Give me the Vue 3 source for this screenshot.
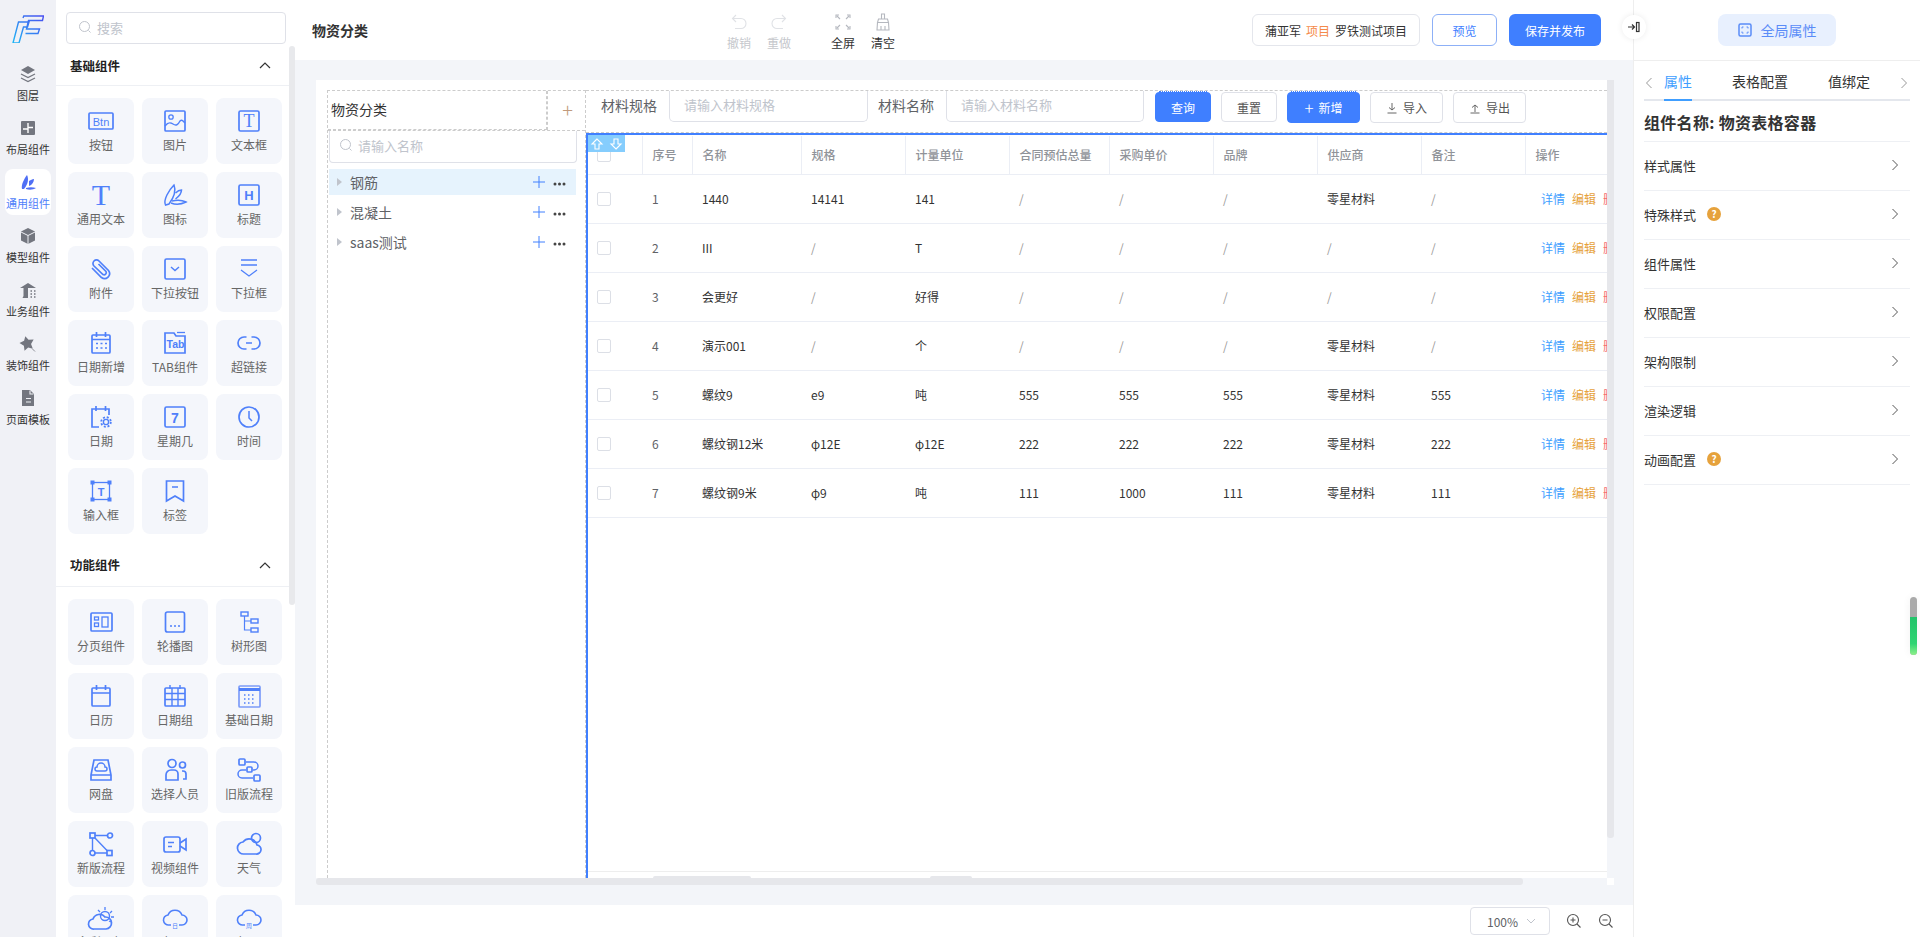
<script setup>
const T = (x, y, s, t, fam = 'Liberation Sans', w = 'normal') =>
  `<text x="${x}" y="${y}" font-size="${s}" font-family="${fam}" font-weight="${w}" text-anchor="middle" fill="#4f80fa" stroke="none">${t}</text>`
const cloud = 'M7 20a5 5 0 0 1-1-10a7.5 7.5 0 0 1 14 0a5 5 0 0 1 0 10h-3M9 20H7'
const I = {
  btn: `<rect x="1" y="5" width="24" height="16" rx="1"/>` + T(13, 17.5, 11, 'Btn'),
  img: `<rect x="3" y="3" width="20" height="20" rx="1"/><circle cx="9" cy="9" r="2.2" stroke-width="1.3"/><path d="M3 18c3-4 5-4 8-2s5 1 7-3c2-2 3 0 5 2" stroke-width="1.4"/>`,
  txt: `<rect x="3" y="3" width="20" height="20" rx="1.5"/>` + T(13, 19, 18, 'T', 'Liberation Serif'),
  bigT: T(13, 23, 30, 'T', 'Liberation Serif'),
  fan: `<path d="M3.5 23C1 18 7 8 12 3c2 5 1 11-5 19z" stroke-width="1.5"/><path d="M13.5 11c2-2 5-3 6-3c0 3-2 6-6 9M10 19c4-1 10-1 14 1c-4 2-10 3-15 1" stroke-width="1.5"/>`,
  h: `<rect x="3" y="3" width="20" height="20" rx="1.5"/>` + T(13, 18, 13, 'H', 'Liberation Sans', 'bold'),
  clip: `<path d="M10.5 8L18 15.5a2.2 2.2 0 0 1-3 3L6 10a3.5 3.5 0 0 1 5-5L20.5 14.5a5 5 0 0 1-7 7L4 12"/>`,
  ddb: `<rect x="3" y="3" width="20" height="20" rx="1.5"/><path d="M9 11l4 3.5 4-3.5" stroke-width="1.5"/>`,
  dd: `<path d="M5 4h16M5 9h16M5 14l8 6 8-6" stroke-width="1.3"/>`,
  calAdd: `<rect x="4" y="5" width="18" height="18" rx="1"/><path d="M4 9.5h18M8.5 2v5M17.5 2v5"/><path d="M8 13.5h2m2.5 0h2m2.5 0h2M8 18h2m2.5 0h2m2.5 0h2" stroke-width="1.5"/>`,
  tab: `<path d="M3 3h9l2 3h9v17H3z"/><path d="M15 2.5h8" stroke-width="1.3"/>` + T(13.5, 18, 10.5, 'Tab', 'Liberation Sans', 'bold'),
  link: `<path d="M10.5 7H8a6 6 0 0 0 0 12h2.5M15.5 7H18a6 6 0 0 1 0 12h-2.5M10 13h6"/>`,
  calGear: `<path d="M21 11V5H4v18h7M8 2v5M17.500 2v5"/><circle cx="18" cy="18" r="2.600" stroke-width="1.400"/><circle cx="18" cy="18" r="4.800" stroke-width="1.800" stroke-dasharray="2 1.800"/>`,
  week: `<rect x="3" y="3" width="20" height="20" rx="1.500"/>` + T(13, 18.500, 14, '7', 'Liberation Sans', 'bold'),
  clock: `<circle cx="13" cy="13" r="10"/><path d="M13 7v7l3 3" stroke-width="1.500"/>`,
  input: `<rect x="4.500" y="4.500" width="17" height="17" stroke-width="1.300"/><path d="M2.500 2.500h4v4h-4zM19.500 2.500h4v4h-4zM2.500 19.500h4v4h-4zM19.500 19.500h4v4h-4z" fill="#4f80fa" stroke="none"/>` + T(13, 17.500, 11, 'T', 'Liberation Sans', 'bold'),
  tag: `<path d="M4.500 3h17v20l-8.500-5-8.500 5zM10 9h6"/>`,
  page: `<rect x="3" y="4" width="21" height="18" rx="1"/><rect x="6.500" y="8" width="4" height="3" stroke-width="1.300"/><rect x="6.500" y="14" width="4" height="3.500" stroke-width="1.300"/><rect x="14" y="8" width="6" height="10" stroke-width="1.300"/>`,
  car: `<rect x="3.500" y="3" width="19" height="20" rx="2"/><path d="M8 17h2m2 0h2m2 0h2" stroke-width="1.500"/>`,
  tree: `<rect x="5" y="3" width="7" height="4" stroke-width="1.400"/><path d="M8.500 7v14h6.500M8.500 12H15" stroke-width="1.200"/><rect x="15" y="10" width="7" height="4" stroke-width="1.400"/><rect x="15" y="19" width="7" height="4" stroke-width="1.400"/>`,
  cal: `<rect x="4" y="5" width="18" height="18" rx="1"/><path d="M4 10h18M8.500 2v5M17.500 2v5"/>`,
  calGrid: `<rect x="3" y="5" width="20" height="18" rx="1"/><path d="M3 10.500h20M3 16.500h20M10 5v18M16 5v18M8 2v4M18 2v4" stroke-width="1.400"/>`,
  calBase: `<rect x="3" y="3" width="21" height="21" rx="1" stroke="#7c9cf8"/><path d="M3 6.500h21" stroke-width="3"/><path d="M8 12h1.500m2.500 0h1.500m2.500 0h1.500M8 16h1.500m2.500 0h1.500m2.500 0h1.500M8 20h1.500m2.500 0h1.500m2.500 0h1.500" stroke-width="1.300"/>`,
  disk: `<path d="M6 3h14l3 15v5H3v-5zM3 18h20"/><path d="M9 14a2 2 0 0 1 0-4a4 4 0 0 1 8 0a2 2 0 0 1 0 4z" stroke-width="1.500"/>`,
  men: `<circle cx="10" cy="6.500" r="4"/><path d="M4 23v-5a5 5 0 0 1 5-5h3a4 4 0 0 1 4 4v6z"/><circle cx="20.500" cy="8" r="3"/><path d="M20 14h1a3 3 0 0 1 3 3v5h-3"/>`,
  flowOld: `<rect x="3" y="2" width="6" height="6" rx="1"/><rect x="11" y="10" width="5" height="5" rx="1"/><rect x="18" y="18" width="6" height="6" rx="1"/><path d="M10 5h8a3.500 3.500 0 0 1 0 8h-1M10 13H6a4 4 0 0 0 0 8h11" stroke-width="1.500"/>`,
  flowNew: `<rect x="2" y="2" width="5" height="5"/><circle cx="22" cy="4.500" r="2.500"/><circle cx="4.500" cy="22" r="2.500"/><rect x="19" y="19.500" width="5" height="5"/><path d="M7 4.500h12.500M7 7l12 12.500M4.500 7v12.500M7 22h12" stroke-width="1.400"/>`,
  video: `<rect x="2" y="6" width="16" height="15" rx="2"/><path d="M18 12l6-4v11l-6-4M6 11.500h6M6 15.500h4"/>`,
  weather: `<circle cx="20" cy="7" r="4.500"/><path d="M8 23a6 6 0 0 1-1-12a8 8 0 0 1 14 3a4.500 4.500 0 0 1-1 9z"/>`,
  sunny: `<circle cx="17" cy="11" r="4.500" stroke-width="1.400"/><path d="M17 2v3M24 6l-2 2M26 12h-3M23 17l-2-1M10 5l2 2" stroke-width="1.300"/><path d="M6 24a5 5 0 0 1-1-10a7 7 0 0 1 12-2a6 6 0 0 1 1 12z"/>`,
  cDay: `<path d="${cloud}" stroke-width="1.600"/>` + T(13, 23, 6, '日', 'Noto Sans CJK SC'),
  cWeek: `<path d="${cloud}" stroke-width="1.600"/>` + T(13, 23, 6, '周', 'Noto Sans CJK SC')
}
const R = {
  layer: `<path d="M10 2l7 4-7 4-7-4z" fill="currentColor" stroke="none"/><path d="M3 10l7 3.500 7-3.500M3 14l7 3.500 7-3.500"/>`,
  layout: `<rect x="3" y="3" width="14" height="14" rx="1" fill="currentColor" stroke="none"/><path d="M5 11h5M10 5v6M10 11v4M10 9.500h5" stroke="#fff" stroke-width="1.400"/>`,
  fan: `<path d="M4 17C3 13 6 7 9 3c2 4 1 9-3 14zM11 9c2-1 3-2 5-2 0 3-2 6-5 7zM8 16c3-1 7-1 10 0-3 2-7 2-10 1z" fill="currentColor" stroke="none"/>`,
  cube: `<path d="M10 2l7 3.500v9L10 18l-7-3.500v-9z" fill="currentColor" stroke="none"/><path d="M3 6l7 3.500L17 6M10 9.500V18" stroke="#f0f1f6" stroke-width="1"/>`,
  biz: `<path d="M2 8l8-5 8 5zM5.500 8h4.500v10H4.500l1-2z" fill="currentColor" stroke="none"/><path d="M12.500 11h1.500m2 0h1.500M12.500 14h1.500m2 0h1.500M12.500 17h1.500m2 0h1.500" stroke-width="1.600"/>`,
  star: `<path transform="rotate(-14 9 9)" d="M9 2l2.300 4.200 5 1-3.600 3.700.6 5L9 13.700 4.700 16l.6-5L1.700 7.200l5-1z" fill="currentColor" stroke="none"/><path d="M14.500 15l2.500 2.500" stroke-width=".8"/>`,
  doc: `<path d="M4 2h8l4 4v12H4z" fill="currentColor" stroke="none"/><path d="M8 10.500h5M8 14h5M12 2.500V6h3.500" stroke="#f0f1f6" stroke-width="1.100"/>`
}
const rail = [
  ['图层', 'layer'], ['布局组件', 'layout'], ['通用组件', 'fan', true], ['模型组件', 'cube'],
  ['业务组件', 'biz'], ['装饰组件', 'star'], ['页面模板', 'doc']
]
const basics = [
  ['按钮', 'btn'], ['图片', 'img'], ['文本框', 'txt'], ['通用文本', 'bigT'], ['图标', 'fan'], ['标题', 'h'],
  ['附件', 'clip'], ['下拉按钮', 'ddb'], ['下拉框', 'dd'], ['日期新增', 'calAdd'], ['TAB组件', 'tab'], ['超链接', 'link'],
  ['日期', 'calGear'], ['星期几', 'week'], ['时间', 'clock'], ['输入框', 'input'], ['标签', 'tag']
]
const funcs = [
  ['分页组件', 'page'], ['轮播图', 'car'], ['树形图', 'tree'], ['日历', 'cal'], ['日期组', 'calGrid'], ['基础日期', 'calBase'],
  ['网盘', 'disk'], ['选择人员', 'men'], ['旧版流程', 'flowOld'], ['新版流程', 'flowNew'], ['视频组件', 'video'], ['天气', 'weather'],
  ['多彩天气', 'sunny'], ['天气一日', 'cDay'], ['天气一周', 'cWeek']
]
const sections = [{ title: '基础组件', items: basics }, { title: '功能组件', items: funcs }]
const tree = ['钢筋', '混凝土', 'saas测试']
const cols = [
  ['序号', 50], ['名称', 109], ['规格', 104], ['计量单位', 104], ['合同预估总量', 100],
  ['采购单价', 104], ['品牌', 104], ['供应商', 104], ['备注', 104]
]
const rows = [
  ['1', '1440', '14141', '141', '/', '/', '/', '零星材料', '/'],
  ['2', 'III', '/', 'T', '/', '/', '/', '/', '/'],
  ['3', '会更好', '/', '好得', '/', '/', '/', '/', '/'],
  ['4', '演示001', '/', '个', '/', '/', '/', '零星材料', '/'],
  ['5', '螺纹9', 'e9', '吨', '555', '555', '555', '零星材料', '555'],
  ['6', '螺纹钢12米', 'φ12E', 'φ12E', '222', '222', '222', '零星材料', '222'],
  ['7', '螺纹钢9米', 'φ9', '吨', '111', '1000', '111', '零星材料', '111']
]
const props = [['样式属性'], ['特殊样式', true], ['组件属性'], ['权限配置'], ['架构限制'], ['渲染逻辑'], ['动画配置', true]]
</script>

<template>
  <div class="app">
    <aside class="rail">
      <div class="logo">
        <svg width="32" height="28" viewBox="0 0 32 28" fill="none">
          <defs>
            <linearGradient id="lg" x1="0" y1="1" x2="1" y2="0">
              <stop offset="0" stop-color="#1fb6f5" />
              <stop offset="1" stop-color="#4a4ff0" />
            </linearGradient>
          </defs>
          <path d="M1 28L6.500 7H17L15.500 12H11.500L7 28ZM11 3L11.800 1H31.500L30.500 5.500H16.500L14.500 14H27.500L26 18.500H13.500" stroke="url(#lg)" stroke-width="1.400" />
        </svg>
      </div>
      <div v-for="r in rail" :key="r[0]" class="rail-item" :class="{ on: r[2] }">
        <svg class="rail-ic" viewBox="0 0 20 20" width="20" height="20" v-html="R[r[1]]"></svg>
        <span>{{ r[0] }}</span>
      </div>
    </aside>

    <section class="panel">
      <div class="panel-search">
        <svg width="14" height="14" viewBox="0 0 14 14" class="sicon"><circle cx="6.500" cy="6.500" r="5" /><path d="M10.500 10.500l2 2" /></svg>
        <span>搜索</span>
      </div>
      <div v-for="s in sections" :key="s.title" class="sec">
        <div class="sec-head">
          <b>{{ s.title }}</b>
          <svg width="12" height="8" viewBox="0 0 12 8" class="up"><path d="M1 7l5-5 5 5" /></svg>
        </div>
        <div class="cards">
          <div v-for="c in s.items" :key="c[0]" class="card">
            <svg class="ic" viewBox="0 0 26 26" width="26" height="26" v-html="I[c[1]]"></svg>
            <span>{{ c[0] }}</span>
          </div>
        </div>
      </div>
      <div class="panel-bar"></div>
    </section>

    <main class="main">
      <header class="top">
        <div class="page-title">物资分类</div>
        <div class="tools">
          <div class="tool off">
            <svg width="20" height="20" viewBox="0 0 20 20"><path d="M7 3L3.500 6.500 7 10M4 6.500h8a4.500 4.500 0 0 1 0 10H6" /></svg>
            <span>撤销</span>
          </div>
          <div class="tool off">
            <svg width="20" height="20" viewBox="0 0 20 20"><path d="M13 3l3.500 3.500L13 10M16 6.500H8a4.500 4.500 0 0 0 0 10h6" /></svg>
            <span>重做</span>
          </div>
        </div>
        <div class="tools second">
          <div class="tool">
            <svg width="20" height="20" viewBox="0 0 20 20"><path d="M3 6V3h3M14 3h3v3M3 14v3h3M17 14v3h-3M4 4l3 3M16 4l-3 3M4 16l3-3M16 16l-3-3" /></svg>
            <span>全屏</span>
          </div>
          <div class="tool">
            <svg width="20" height="20" viewBox="0 0 20 20"><path d="M8.500 2h3v5h-3zM5.500 7h9l1 3.500h-11zM4.500 10.500l-.5 7.500h12l-.5-7.500M8 14v4M12 14v4" /></svg>
            <span>清空</span>
          </div>
        </div>
        <div class="top-right">
          <div class="project">蒲亚军<em>项目</em>罗铁测试项目</div>
          <button class="btn-preview">预览</button>
          <button class="btn-save">保存并发布</button>
        </div>
      </header>

      <div class="stage">
        <div class="canvas">
          <div class="left">
            <div class="left-head">
              <div class="left-title">物资分类</div>
              <div class="left-add">+</div>
            </div>
            <div class="tree-search">
              <svg width="14" height="14" viewBox="0 0 14 14" class="sicon"><circle cx="6.500" cy="6.500" r="5" /><path d="M10.500 10.500l2 2" /></svg>
              <span>请输入名称</span>
            </div>
            <div class="tree">
              <div v-for="(t, i) in tree" :key="t" class="tree-row" :class="{ sel: i === 0 }">
                <i class="caret"></i>
                <span class="tree-label">{{ t }}</span>
                <svg class="tree-plus" width="12" height="12" viewBox="0 0 12 12"><path d="M6 0v12M0 6h12" /></svg>
                <svg class="tree-more" width="13" height="4" viewBox="0 0 13 4"><circle cx="2" cy="2" r="1.500" /><circle cx="6.500" cy="2" r="1.500" /><circle cx="11" cy="2" r="1.500" /></svg>
              </div>
            </div>
          </div>

          <div class="right">
            <div class="toolbar">
              <label>材料规格</label>
              <div class="field w1">请输入材料规格</div>
              <label class="l2">材料名称</label>
              <div class="field w2">请输入材料名称</div>
              <button class="b b-primary b-q dotted">查询</button>
              <button class="b b-q">重置</button>
              <button class="b b-primary b-w dotted tall"><span class="pl">+</span>新增</button>
              <button class="b b-w tall">
                <svg width="12" height="12" viewBox="0 0 12 12"><path d="M6 1v7M3 5.500L6 8l3-2.500M1.500 11h9" /></svg>导入
              </button>
              <button class="b b-w tall">
                <svg width="12" height="12" viewBox="0 0 12 12"><path d="M6 10V3M3 5.500L6 3l3 2.500M1.500 11h9" /></svg>导出
              </button>
            </div>
            <div class="table-box">
              <div class="mover">
                <svg width="14" height="14" viewBox="0 0 14 14"><path d="M7 2L2 7h3v5h4V7h3z" /></svg>
                <svg width="14" height="14" viewBox="0 0 14 14"><path d="M7 12l5-5H9V2H5v5H2z" /></svg>
              </div>
              <div class="table-wrap">
                <table>
                  <colgroup>
                    <col style="width:54px" />
                    <col v-for="c in cols" :key="c[0]" :style="{ width: c[1] + 'px' }" />
                    <col style="width:110px" />
                  </colgroup>
                  <thead>
                    <tr>
                      <th class="c0"><i class="chk"></i></th>
                      <th v-for="c in cols" :key="c[0]">{{ c[0] }}</th>
                      <th>操作</th>
                    </tr>
                  </thead>
                  <tbody>
                    <tr v-for="r in rows" :key="r[0]">
                      <td class="c0"><i class="chk"></i></td>
                      <td v-for="(v, i) in r" :key="i" :class="{ slash: v === '/', idx: i === 0 }">{{ v }}</td>
                      <td class="ops"><a class="o1">详情</a><a class="o2">编辑</a><a class="o3">删除</a></td>
                    </tr>
                  </tbody>
                </table>
              </div>
              <div class="table-foot"><i class="th1"></i><i class="th2"></i></div>
            </div>
          </div>
        </div>
        <div class="vbar"><i></i></div>
        <div class="hbar"><i></i></div>
        <div class="corner"></div>
      </div>

      <footer class="foot">
        <div class="zoom-sel">100%<svg width="10" height="6" viewBox="0 0 10 6"><path d="M1 1l4 4 4-4" /></svg></div>
        <svg class="zi" width="16" height="16" viewBox="0 0 16 16"><circle cx="7" cy="7" r="5.500" /><path d="M11 11l3.500 3.500M4.500 7h5M7 4.500v5" /></svg>
        <svg class="zi" width="16" height="16" viewBox="0 0 16 16"><circle cx="7" cy="7" r="5.500" /><path d="M11 11l3.500 3.500M4.500 7h5" /></svg>
      </footer>
      <div class="collapse">
        <svg width="12" height="12" viewBox="0 0 12 12"><path d="M0 6h6M4 3.500L6.500 6 4 8.500" /><rect x="8.500" y="1.500" width="2.500" height="9" /></svg>
      </div>
    </main>

    <aside class="props">
      <div class="props-top">
        <div class="global">
          <svg width="14" height="14" viewBox="0 0 14 14"><rect x="1" y="1" width="12" height="12" rx="1.500" /><path d="M4 5.500V4h1.500M8.500 4H10v1.500M4 8.500V10h1.500M10 8.500V10H8.500" stroke-width="1" /></svg>
          全局属性
        </div>
      </div>
      <div class="tabs">
        <svg class="tab-l" width="8" height="12" viewBox="0 0 8 12"><path d="M6.500 1L1.500 6l5 5" /></svg>
        <span class="tab on">属性</span>
        <span class="tab">表格配置</span>
        <span class="tab">值绑定</span>
        <svg class="tab-r" width="8" height="12" viewBox="0 0 8 12"><path d="M1.500 1l5 5-5 5" /></svg>
      </div>
      <h3 class="comp">组件名称: 物资表格容器</h3>
      <div v-for="p in props" :key="p[0]" class="prop">
        <span>{{ p[0] }}</span>
        <i v-if="p[1]" class="q">?</i>
        <svg width="8" height="12" viewBox="0 0 8 12"><path d="M1.500 1l5 5-5 5" /></svg>
      </div>
      <div class="slider"><i></i></div>
    </aside>
  </div>
</template>

<style>
html, body { margin: 0; padding: 0; overflow: hidden; background: #fff; }
</style>

<style scoped>
.app { display: flex; width: 1920px; height: 937px; overflow: hidden; background: #fff; font-family: "Noto Sans CJK SC", "Noto Sans", sans-serif; font-size: 12px; color: #333; }
button { font-family: inherit; cursor: pointer; padding: 0; }
i { font-style: normal; }

.rail { width: 56px; flex: none; background: #f0f1f6; display: flex; flex-direction: column; align-items: center; }
.logo { height: 61px; box-sizing: border-box; padding-top: 15px; }
.logo svg { display: block; }
.rail-item { width: 46px; height: 46px; margin-bottom: 8px; border-radius: 8px; display: flex; flex-direction: column; align-items: center; color: #333; font-size: 11px; line-height: 16px; padding-top: 3px; box-sizing: border-box; }
.rail-item span { white-space: nowrap; margin-top: 3px; }
.rail-ic { color: #73767f; fill: none; stroke: currentColor; stroke-width: 1.300; }
.rail-item.on { background: #fff; color: #4f80fa; }
.rail-item.on .rail-ic { color: #4f6ff5; }

.panel { width: 239px; flex: none; position: relative; height: 937px; overflow: hidden; background: #fff; }
.panel-search { margin: 12px 9px 2px 10px; height: 32px; box-sizing: border-box; border: 1px solid #dfe1e8; border-radius: 4px; display: flex; align-items: center; padding: 0 0 2px 11px; color: #c0c4cc; font-size: 13px; gap: 5px; }
.sicon { fill: none; stroke: #c0c4cc; stroke-width: 1; flex: none; }
.sec-head { height: 40px; box-sizing: border-box; width: 233px; border-bottom: 1px solid #eef0f4; display: flex; align-items: center; justify-content: space-between; padding: 0 18px 1px 14px; font-size: 12px; }
.sec + .sec .sec-head { padding-bottom: 4px; }
.sec-head b { font-size: 12.500px; font-weight: 700; color: #222; }
.up { fill: none; stroke: #333; stroke-width: 1.200; }
.cards { display: grid; grid-template-columns: repeat(3, 66px); grid-auto-rows: 66px; gap: 8px; padding: 12px 0 13px 12px; }
.card { background: #f4f6fb; border-radius: 8px; display: flex; flex-direction: column; align-items: center; padding-top: 10px; box-sizing: border-box; color: #666; font-size: 12px; line-height: 18px; }
.card span { margin-top: 2px; white-space: nowrap; }
.ic { fill: none; stroke: #4f80fa; stroke-width: 1.700; overflow: visible; flex: none; }
.panel-bar { position: absolute; left: 233px; top: 46px; width: 6px; height: 559px; background: #e8e9ec; border-radius: 3px; }

.main { flex: none; width: 1338px; display: flex; flex-direction: column; position: relative; }
.top { height: 60px; flex: none; display: flex; align-items: center; }
.page-title { margin-left: 17px; width: 56px; font-size: 14px; font-weight: 600; color: #333; white-space: nowrap; }
.tools { display: flex; margin-left: 351px; }
.tools.second { margin-left: 24px; }
.tool { width: 40px; display: flex; flex-direction: column; align-items: center; font-size: 12px; color: #333; line-height: 16px; padding-top: 3px; }
.tool svg { fill: none; stroke: #b5b8bf; stroke-width: 1.100; margin-bottom: 3px; }
.tool.off { color: #c5c7cc; }
.tool.off svg { stroke: #e0e2e6; }
.top-right { margin-left: auto; margin-right: 32px; display: flex; gap: 12px; }
.project { height: 32px; width: 168px; box-sizing: border-box; border: 1px solid #e4e6ec; border-radius: 6px; display: flex; align-items: center; justify-content: center; font-size: 12px; color: #333; white-space: nowrap; }
.project em { font-style: normal; color: #f58a4a; margin: 0 5px; }
.btn-preview { width: 65px; height: 32px; border: 1px solid #8db0f7; border-radius: 6px; background: #fff; color: #3f7fff; font-size: 12px; }
.btn-save { width: 92px; height: 32px; border: 0; border-radius: 6px; background: #3f7fff; color: #fff; font-size: 12px; }

.stage { height: 845px; flex: none; box-sizing: border-box; background: #f3f5f9; padding: 20px 19px 20px 21px; display: grid; grid-template-columns: 1291px 7px; grid-template-rows: 798px 7px; }
.canvas { background: #fff; display: flex; padding: 10px 0 0 11px; box-sizing: border-box; overflow: hidden; min-width: 0; }
.vbar { background: #f3f5f9; }
.vbar i { display: block; height: 758px; background: #e6e7eb; border-radius: 0 0 3px 3px; }
.hbar { background: transparent; }
.hbar i { display: block; width: 1207px; height: 7px; background: #e6e7eb; border-radius: 3px; }
.corner { background: #fff; }

.left { width: 259px; flex: none; box-sizing: border-box; border: 1px dashed #ccc; border-bottom: 0; display: flex; flex-direction: column; }
.left-head { display: flex; height: 39px; flex: none; border-bottom: 1px dashed #ccc; }
.left-title { flex: 1; border: 1px dashed #ccc; border-top: 0; border-left: 0; font-size: 14px; color: #333; line-height: 37px; padding-left: 3px; }
.left-add { width: 38px; flex: none; text-align: center; line-height: 38px; font-size: 20px; font-weight: 300; color: #c19a7c; border-left: 1px dashed #ccc; padding-left: 2px; box-sizing: border-box; }
.tree-search { width: 248px; height: 32px; margin-left: 1px; flex: none; box-sizing: border-box; border: 1px solid #dfe1e8; border-top: 0; border-radius: 0 0 4px 4px; display: flex; align-items: center; padding: 0 0 3px 9px; gap: 5px; color: #c0c4cc; font-size: 13px; }
.tree { margin: 6px 0 0 1px; width: 247px; }
.tree-row { height: 26px; margin-bottom: 4px; display: flex; align-items: center; color: #606266; font-size: 14px; padding-right: 10px; }
.tree-row.sel { background: #e6f3fd; }
.caret { width: 0; height: 0; border-left: 5px solid #c0c4cc; border-top: 4px solid transparent; border-bottom: 4px solid transparent; margin: 0 8px 0 8px; }
.tree-label { flex: 1; }
.tree-plus { stroke: #4080ff; stroke-width: 1; fill: none; margin-right: 8px; flex: none; }
.tree-more { fill: #444; margin-top: 3px; flex: none; }

.right { flex: 1; min-width: 0; display: flex; flex-direction: column; }
.toolbar { height: 43px; flex: none; box-sizing: border-box; border-top: 1px dashed #ccc; border-bottom: 1px dashed #ccc; display: flex; align-items: flex-start; padding-left: 15px; }
.toolbar label { font-size: 14px; color: #606266; line-height: 29px; width: 56px; white-space: nowrap; }
.toolbar .l2 { margin-left: 10px; }
.field { height: 31px; box-sizing: border-box; border: 1px solid #dfe1e8; border-top: 0; border-radius: 0 0 5px 5px; margin-left: 12px; padding-left: 14px; line-height: 28px; font-size: 13px; color: #c0c4cc; white-space: nowrap; }
.w1 { width: 199px; }
.w2 { width: 198px; }
.b { height: 30px; margin: 1px 0 0 10px; box-sizing: border-box; border: 1px solid #dfe1e8; border-radius: 4px; background: #fff; color: #555; font-size: 12px; display: flex; align-items: center; justify-content: center; gap: 5px; position: relative; }
.b svg { fill: none; stroke: #666; stroke-width: 1; }
.b-primary { background: #3f7fff; border-color: #3f7fff; color: #fff; }
.b-q { width: 56px; }
.b-w { width: 73px; }
.w2 + .b { margin-left: 11px; }
.tall { height: 31px; }
.pl { font-size: 17px; font-weight: 300; line-height: 16px; }
.dotted::before { content: ""; position: absolute; left: 3px; right: 3px; top: -2px; border-top: 1px dotted #4080ff; }

.table-box { flex: 1; min-height: 0; position: relative; border-top: 2px solid #4080ff; border-left: 2px solid #4080ff; display: flex; flex-direction: column; margin-left: 0; }
.mover { position: absolute; left: 0; top: 0; width: 37px; height: 17px; background: #85cdfd; display: flex; align-items: center; justify-content: space-around; z-index: 2; }
.mover svg { fill: none; stroke: #fff; stroke-width: 1.100; }
.table-wrap { flex: 1; min-height: 0; overflow: hidden; padding-top: 1px; }
table { border-collapse: collapse; table-layout: fixed; width: 1047px; font-size: 12px; }
th { height: 38px; padding: 0 10px; box-sizing: border-box; text-align: left; font-weight: 500; color: #909399; border-right: 1px solid #ebeef5; border-bottom: 1px solid #ebeef5; white-space: nowrap; }
td { height: 49px; padding: 0 10px; box-sizing: border-box; color: #333; border-bottom: 1px solid #ebeef5; white-space: nowrap; }
th:last-child { border-right: 0; }
.c0 { padding-left: 9px; }
.idx { color: #606266; }
.slash { color: #999; }
.chk { display: block; width: 14px; height: 14px; box-sizing: border-box; border: 1px solid #dcdfe6; border-radius: 2px; background: #fff; }
.ops { padding-left: 16px; }
.ops a { margin-right: 7px; }
.o1 { color: #409eff; }
.o2 { color: #e6a23c; }
.o3 { color: #f56c6c; }
.table-foot { height: 7px; flex: none; box-sizing: border-box; border-top: 1px solid #eee; display: flex; align-items: flex-end; padding-left: 65px; }
.th1, .th2 { display: block; height: 2px; background: #e6e7eb; border-radius: 2px 2px 0 0; }
.th1 { width: 98px; }
.th2 { width: 42px; margin-left: 179px; }

.foot { flex: 1; display: flex; align-items: center; padding-left: 1175px; }
.zoom-sel { width: 80px; height: 28px; box-sizing: border-box; border: 1px solid #dfe1e8; border-radius: 4px; display: flex; align-items: center; padding-left: 16px; font-size: 12px; color: #606266; gap: 8px; }
.zoom-sel svg { fill: none; stroke: #c0c4cc; stroke-width: 1; }
.zi { fill: none; stroke: #555; stroke-width: 1.100; flex: none; margin-left: 16px; }
.zoom-sel + .zi { margin-left: 16px; }
.collapse { position: absolute; right: -13px; top: 15px; width: 24px; height: 24px; border-radius: 50%; background: #fff; box-shadow: 0 0 6px rgba(0, 0, 0, .08); display: flex; align-items: center; justify-content: center; z-index: 3; }
.collapse svg { fill: none; stroke: #333; stroke-width: 1.200; }

.props { flex: none; width: 287px; box-sizing: border-box; border-left: 1px solid #eee; position: relative; display: flex; flex-direction: column; }
.props-top { height: 61px; flex: none; box-sizing: border-box; border-bottom: 1px solid #eee; padding: 14px 0 0 84px; }
.global { width: 118px; height: 32px; background: #e8f0fe; border-radius: 8px; display: flex; align-items: center; justify-content: center; gap: 9px; color: #5a8cf8; font-size: 14px; }
.global svg { fill: none; stroke: #5a8cf8; stroke-width: 1.500; }
.tabs { margin: 0 10px; height: 40px; flex: none; box-sizing: border-box; border-bottom: 2px solid #e4e7ed; display: flex; align-items: center; padding-left: 20px; font-size: 14px; position: relative; gap: 40px; color: #333; }
.tab { height: 38px; line-height: 40px; white-space: nowrap; box-sizing: content-box; }
.tab.on { color: #409eff; box-shadow: 0 2px 0 #409eff; }
.tab-l, .tab-r { position: absolute; top: 16px; fill: none; stroke: #999; stroke-width: 1; }
.tab-l { left: 1px; }
.tab-r { right: 2px; }
.comp { margin: 0 10px; height: 41px; flex: none; box-sizing: border-box; border-bottom: 1px solid #eef0f4; font-size: 16px; line-height: 43px; font-weight: 700; color: #333; white-space: nowrap; letter-spacing: .3px; }
.prop { margin: 0 10px; height: 49px; flex: none; box-sizing: border-box; border-bottom: 1px solid #eef0f4; display: flex; align-items: center; font-size: 13px; color: #333; padding-bottom: 2px; }
.prop svg { margin-left: auto; margin-right: 11px; fill: none; stroke: #555; stroke-width: 1; }
.q { width: 14px; height: 14px; border-radius: 50%; background: #e6a23c; color: #fff; font-size: 10px; line-height: 14px; text-align: center; font-weight: 700; margin-left: 11px; }
.slider { position: absolute; left: 276px; top: 597px; width: 7px; height: 58px; border-radius: 4px; background: #aaa; overflow: hidden; box-shadow: 0 0 8px rgba(0, 0, 0, .06); }
.slider i { display: block; margin-top: 20px; height: 38px; background: linear-gradient(#22c36a, #2fd472 70%, #8ef08a); }
</style>
